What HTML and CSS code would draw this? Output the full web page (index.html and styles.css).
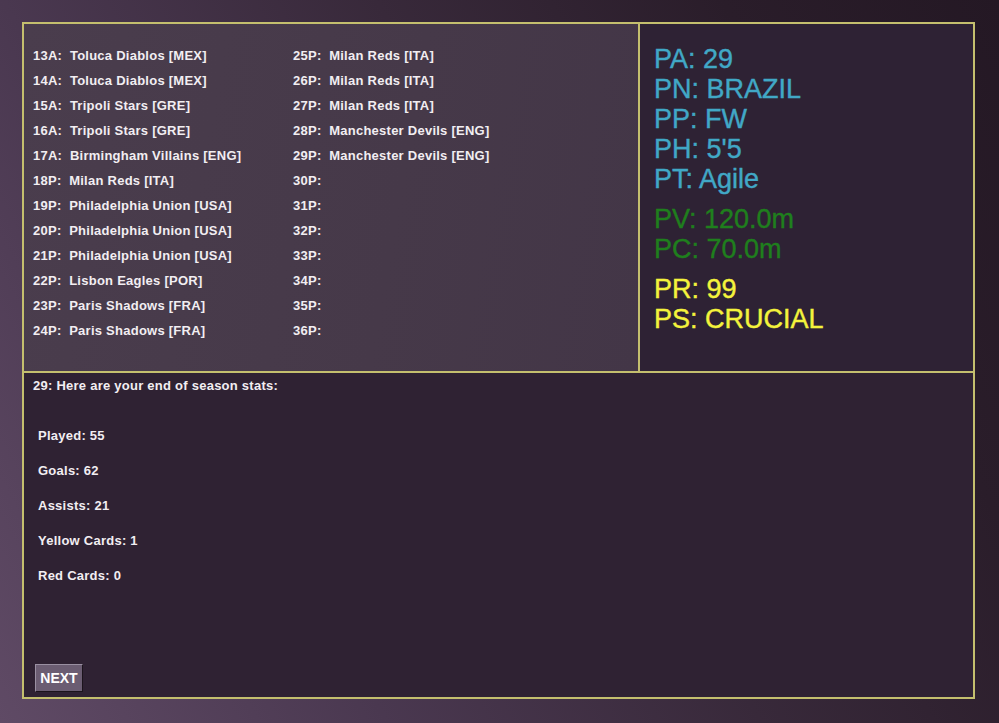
FILE: index.html
```html
<!DOCTYPE html>
<html>
<head>
<meta charset="utf-8">
<link rel="stylesheet" href="styles.css">
</head>
<body>
<div class="frame">
  <div class="top">
    <div class="transfers">
      <div class="col">
        <div class="row">13A:  Toluca Diablos [MEX]</div>
        <div class="row">14A:  Toluca Diablos [MEX]</div>
        <div class="row">15A:  Tripoli Stars [GRE]</div>
        <div class="row">16A:  Tripoli Stars [GRE]</div>
        <div class="row">17A:  Birmingham Villains [ENG]</div>
        <div class="row">18P:  Milan Reds [ITA]</div>
        <div class="row">19P:  Philadelphia Union [USA]</div>
        <div class="row">20P:  Philadelphia Union [USA]</div>
        <div class="row">21P:  Philadelphia Union [USA]</div>
        <div class="row">22P:  Lisbon Eagles [POR]</div>
        <div class="row">23P:  Paris Shadows [FRA]</div>
        <div class="row">24P:  Paris Shadows [FRA]</div>
      </div>
      <div class="col">
        <div class="row">25P:  Milan Reds [ITA]</div>
        <div class="row">26P:  Milan Reds [ITA]</div>
        <div class="row">27P:  Milan Reds [ITA]</div>
        <div class="row">28P:  Manchester Devils [ENG]</div>
        <div class="row">29P:  Manchester Devils [ENG]</div>
        <div class="row">30P:</div>
        <div class="row">31P:</div>
        <div class="row">32P:</div>
        <div class="row">33P:</div>
        <div class="row">34P:</div>
        <div class="row">35P:</div>
        <div class="row">36P:</div>
      </div>
    </div>
    <div class="profile">
      <div class="group cyan">
        <div>PA: 29</div>
        <div>PN: BRAZIL</div>
        <div>PP: FW</div>
        <div>PH: 5'5</div>
        <div>PT: Agile</div>
      </div>
      <div class="group green">
        <div>PV: 120.0m</div>
        <div>PC: 70.0m</div>
      </div>
      <div class="group yellow">
        <div>PR: 99</div>
        <div>PS: CRUCIAL</div>
      </div>
    </div>
  </div>
  <div class="bottom">
    <div class="heading">29: Here are your end of season stats:</div>
    <div class="stats">
      <div>Played: 55</div>
      <div>Goals: 62</div>
      <div>Assists: 21</div>
      <div>Yellow Cards: 1</div>
      <div>Red Cards: 0</div>
    </div>
    <button class="next">NEXT</button>
  </div>
</div>
</body>
</html>
```

FILE: styles.css
```css
html, body {
  margin: 0;
  padding: 0;
  width: 999px;
  height: 723px;
  overflow: hidden;
}
body {
  background: linear-gradient(62deg, #5f4a65 0%, #4a3850 28%, #38293a 55%, #2a1d2a 80%, #241824 100%);
  font-family: "Liberation Sans", Arial, sans-serif;
}
.frame {
  box-sizing: border-box;
  margin: 22px 0 0 22px;
  width: 953px;
  height: 677px;
  border: 2px solid #c4bf6e;
  box-shadow: inset 0 0 0 1px #1e1618;
  display: grid;
  grid-template-rows: 349px 1fr;
}
.top {
  display: grid;
  grid-template-columns: 616px 1fr;
  border-bottom: 2px solid #c4bf6e;
}
.transfers {
  border-right: 2px solid #c4bf6e;
  background: linear-gradient(100deg, #4a3d4d 0%, #463949 60%, #433647 100%);
  padding: 19px 0 0 9px;
  display: grid;
  grid-template-columns: 260px 1fr;
  color: #f2eef2;
  font-size: 13px;
  font-weight: bold;
  letter-spacing: 0.25px;
}
.row {
  height: 25px;
  line-height: 25px;
  white-space: pre;
}
.profile {
  background: #2e2234;
  padding: 20px 0 0 14px;
  font-size: 27px;
  line-height: 30px;
  -webkit-text-stroke: 0.4px currentColor;
}
.group + .group {
  margin-top: 10px;
}
.cyan { color: #41a8c6; }
.green { color: #1f7f1d; }
.yellow { color: #f4f33c; }
.bottom {
  background: #2f2233;
  display: flex;
  flex-direction: column;
  align-items: flex-start;
  padding: 1px 0 5px 9px;
  color: #f2eef2;
  font-size: 13px;
  font-weight: bold;
  letter-spacing: 0.25px;
}
.heading {
  line-height: 24px;
}
.stats {
  margin-top: 20px;
  padding-left: 5px;
  line-height: 35px;
}
.next {
  margin-top: auto;
  margin-left: 2px;
  width: 48px;
  height: 28px;
  padding: 0;
  background: #6b5d72;
  border: 1px solid;
  border-color: #9a90a2 #1c141c #1c141c #9a90a2;
  color: #ffffff;
  font-family: "Liberation Sans", Arial, sans-serif;
  font-size: 14px;
  font-weight: bold;
}
```
